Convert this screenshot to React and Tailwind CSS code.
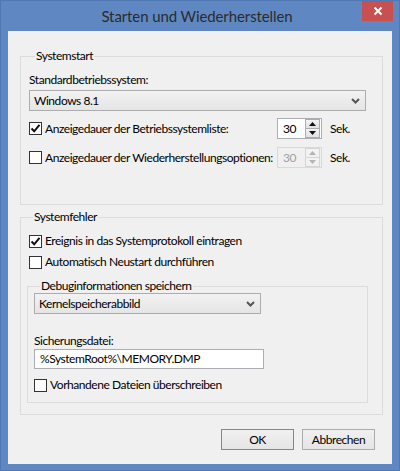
import React from 'react';

const FONT = { fontFamily: 'Lato, "Noto Sans", sans-serif' };

function Check({ checked }) {
  return (
    <span className="w-[13px] h-[13px] shrink-0 border border-[#333333] bg-white flex items-center justify-center">
      {checked && (
        <svg width="11" height="11" viewBox="0 0 11 11">
          <path d="M1.5 5.5 L4.2 8.3 L9.5 1.8" fill="none" stroke="#111" strokeWidth="2" />
        </svg>
      )}
    </span>
  );
}

function CheckRow({ checked, label, className = '' }) {
  return (
    <div className={`flex items-center h-[16px] ${className}`}>
      <Check checked={checked} />
      <span className="ml-[3px] whitespace-nowrap">{label}</span>
    </div>
  );
}

function Chevron() {
  return (
    <svg width="9" height="6" viewBox="0 0 9 6">
      <path d="M1 1 L4.5 4.5 L8 1" fill="none" stroke="#555" strokeWidth="2" />
    </svg>
  );
}

function ComboBox({ value, className = '' }) {
  return (
    <div className={`h-[21px] border border-[#acacac] bg-gradient-to-b from-[#f2f2f2] to-[#e5e5e5] flex items-center pl-[4px] pr-[5px] ${className}`}>
      <span className="flex-1">{value}</span>
      <Chevron />
    </div>
  );
}

function Arrow({ up, disabled }) {
  return (
    <svg width="7" height="4" viewBox="0 0 7 4">
      <path d={up ? 'M0 4 L3.5 0 L7 4 Z' : 'M0 0 L3.5 4 L7 0 Z'} fill={disabled ? '#b4b4b4' : '#111'} />
    </svg>
  );
}

function Spinner({ value, disabled }) {
  const btn = disabled
    ? 'border-[#d5d5d5] from-[#f4f4f4] to-[#f0f0f0]'
    : 'border-[#acacac] from-[#f2f2f2] to-[#e2e2e2]';
  return (
    <div className={`w-[45px] h-[21px] border flex items-stretch ${disabled ? 'border-[#d9d9d9] bg-[#f0f0f0] text-[#a0a0a0]' : 'border-[#abadb3] bg-white'}`}>
      <span className="flex-1 pl-[5px] flex items-center">{value}</span>
      <div className="w-[15px] flex flex-col mr-[1px]">
        <div className={`flex-1 border bg-gradient-to-b ${btn} flex items-center justify-center`}>
          <Arrow up disabled={disabled} />
        </div>
        <div className={`flex-1 border border-t-0 bg-gradient-to-b ${btn} flex items-center justify-center`}>
          <Arrow disabled={disabled} />
        </div>
      </div>
    </div>
  );
}

function Group({ title, className = '', children }) {
  return (
    <fieldset className={`border border-[#dcdcdc] ${className}`}>
      <legend className="ml-[6px] px-[1px] leading-[14px]">{title}</legend>
      {children}
    </fieldset>
  );
}

function Button({ label, primary }) {
  return (
    <button
      className={`w-[73px] h-[21px] border bg-gradient-to-b from-[#f0f0f0] to-[#e5e5e5] flex items-center justify-center ${primary ? 'border-[#3399ff]' : 'border-[#acacac]'}`}
    >
      {label}
    </button>
  );
}

export default function App() {
  return (
    <div
      className="w-[400px] h-[471px] bg-[#5f88c3] border border-[#5078b2] flex flex-col text-[12px] tracking-[-0.45px] text-black"
      style={FONT}
    >
      {/* title bar */}
      <div className="h-[30px] flex items-start">
        <div className="flex-1 h-[30px] flex items-center justify-center pl-[31px] text-[15px] tracking-[-0.1px] text-[#2b2b2b]">
          Starten und Wiederherstellen
        </div>
        <div className="w-[31px] h-[20px] bg-[#c75050] flex items-center justify-center mr-[6px]">
          <svg width="10" height="10" viewBox="0 0 10 10">
            <path d="M1.5 1.5 L8.5 8.5 M8.5 1.5 L1.5 8.5" stroke="#fff" strokeWidth="2" />
          </svg>
        </div>
      </div>

      {/* client area */}
      <div className="mx-[7px] mb-[6px] flex-1 bg-[#f0f0f0] pl-[12px] pr-[9px] pt-[18px] flex flex-col">
        <Group title="Systemstart" className="pl-[8px] pr-[16px] pb-[36px]">
          <div className="mt-[9px] leading-[16px]">Standardbetriebssystem:</div>
          <ComboBox value="Windows 8.1" className="mt-[2px]" />
          <div className="mt-[7px] flex items-center">
            <div className="w-[248px]">
              <CheckRow checked label="Anzeigedauer der Betriebssystemliste:" />
            </div>
            <Spinner value="30" />
            <span className="ml-[8px]">Sek.</span>
          </div>
          <div className="mt-[8px] flex items-center">
            <div className="w-[248px]">
              <CheckRow label="Anzeigedauer der Wiederherstellungsoptionen:" />
            </div>
            <Spinner value="30" disabled />
            <span className="ml-[8px]">Sek.</span>
          </div>
        </Group>

        <Group title="Systemfehler" className="mt-[5px] pl-[6px] pr-[14px] pb-[11px]">
          <CheckRow checked label="Ereignis in das Systemprotokoll eintragen" className="mt-[9px] ml-[2px]" />
          <CheckRow label="Automatisch Neustart durchführen" className="mt-[5px] ml-[2px]" />

          <Group title="Debuginformationen speichern" className="mt-[9px] pl-[6px] pb-[9px]">
            <ComboBox value="Kernelspeicherabbild" className="w-[227px]" />
            <div className="mt-[19px] leading-[16px]">Sicherungsdatei:</div>
            <div className="w-[230px] h-[20px] border border-[#abadb3] bg-white flex items-center pl-[5px]">
              %SystemRoot%\MEMORY.DMP
            </div>
            <CheckRow label="Vorhandene Dateien überschreiben" className="mt-[8px]" />
          </Group>
        </Group>

        <div className="mt-[14px] flex justify-end gap-[8px] pr-[8px]">
          <Button label="OK" primary />
          <Button label="Abbrechen" />
        </div>
      </div>
    </div>
  );
}
